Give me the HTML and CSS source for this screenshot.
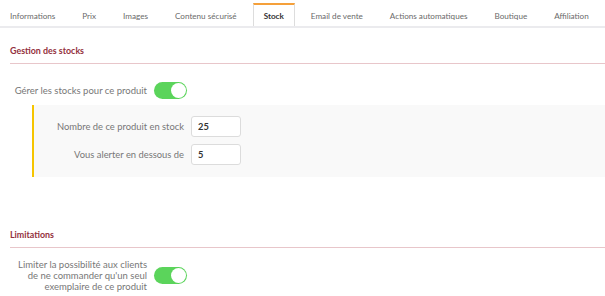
FILE: index.html
```html
<!DOCTYPE html>
<html lang="fr">
<head>
<meta charset="utf-8">
<link rel="stylesheet" href="styles.css">
</head>
<body>
<nav class="tabs">
  <div class="tab">Informations</div>
  <div class="tab">Prix</div>
  <div class="tab">Images</div>
  <div class="tab">Contenu sécurisé</div>
  <div class="tab active">Stock</div>
  <div class="tab">Email de vente</div>
  <div class="tab">Actions automatiques</div>
  <div class="tab">Boutique</div>
  <div class="tab">Affiliation</div>
</nav>

<section class="section first">
  <h2 class="section-title">Gestion des stocks</h2>
  <div class="row">
    <label class="row-label">Gérer les stocks pour ce produit</label>
    <span class="toggle"><span class="knob"></span></span>
  </div>
  <div class="panel">
    <div class="field">
      <label class="field-label">Nombre de ce produit en stock</label>
      <input class="field-input" type="text" value="25">
    </div>
    <div class="field">
      <label class="field-label">Vous alerter en dessous de</label>
      <input class="field-input" type="text" value="5">
    </div>
  </div>
</section>

<section class="section second">
  <h2 class="section-title">Limitations</h2>
  <div class="row row-tight">
    <label class="row-label multi">Limiter la possibilité aux clients<br>de ne commander qu'un seul<br>exemplaire de ce produit</label>
    <span class="toggle"><span class="knob"></span></span>
  </div>
</section>
</body>
</html>
```

FILE: styles.css
```css
* { box-sizing: border-box; }
html, body { margin: 0; padding: 0; background: #fff; }
body {
  font-family: "Lato", "Liberation Sans", sans-serif;
  font-size: 9.4px;
  color: #777;
  width: 605px;
  height: 296px;
  overflow: hidden;
}

.tabs {
  display: flex;
  gap: 5px;
  height: 28px;
  padding-top: 3px;
  border-bottom: 2px solid #ebebee;
  overflow: hidden;
}
.tab {
  padding: 0 10px;
  line-height: 22px;
  font-size: 8.15px;
  color: #6a6a6a;
  border: 1px solid transparent;
  border-top: 2px solid transparent;
  white-space: nowrap;
}
.tab:first-child { margin-left: -1px; }
.tab.active {
  color: #333;
  font-weight: 700;
  background: #fff;
  border-color: #ddd;
  border-top-color: #f5a03a;
  border-bottom: none;
  margin-bottom: -2px;
}

.section { padding-left: 10px; }
.section.first { padding-top: 17px; }
.section.second { padding-top: 52px; }

.section-title {
  margin: 0;
  font-size: 8.9px;
  font-weight: 700;
  color: #93303c;
  line-height: 12px;
  padding-bottom: 6px;
  border-bottom: 1px solid #e8c6ca;
}

.row {
  display: flex;
  align-items: center;
  gap: 7px;
  margin-top: 18px;
}
.row.row-tight { margin-top: 11px; }
.row-label {
  width: 137px;
  text-align: right;
  font-size: 9.5px;
  color: #777;
  white-space: nowrap;
}
.row-label.multi { line-height: 11px; }

.toggle {
  position: relative;
  width: 33px;
  height: 17px;
  border-radius: 9px;
  background: #5bd45b;
  flex: none;
}
.knob {
  position: absolute;
  right: 1px;
  top: 1px;
  width: 15px;
  height: 15px;
  border-radius: 50%;
  background: #fff;
}

.panel {
  margin: 6px 0 0 22px;
  border-left: 2px solid #f6c500;
  background: #f9f9f9;
  padding: 11px 0 12px 0;
  display: flex;
  flex-direction: column;
  gap: 7px;
}
.field {
  display: flex;
  align-items: center;
  gap: 7px;
}
.field-label {
  width: 150px;
  text-align: right;
  font-size: 9.4px;
  color: #777;
  white-space: nowrap;
}
.field-input {
  width: 50px;
  height: 21px;
  border: 1px solid #dcdcdc;
  border-radius: 3px;
  background: #fff;
  padding: 0 6px;
  font-family: inherit;
  font-size: 9.3px;
  font-weight: 700;
  color: #333;
}
```
